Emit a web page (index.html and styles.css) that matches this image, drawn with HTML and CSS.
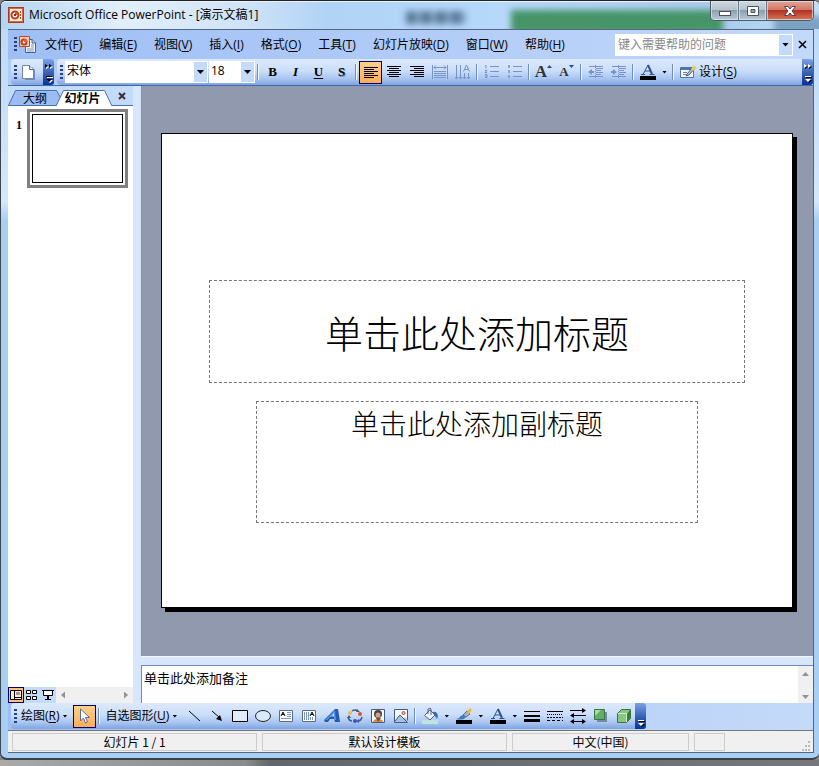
FILE: index.html
```html
<!DOCTYPE html>
<html lang="zh-CN">
<head>
<meta charset="utf-8">
<title>Microsoft Office PowerPoint - [演示文稿1]</title>
<link rel="stylesheet" href="styles.css">
</head>
<body>
<div class="window">
  <header class="titlebar">
    <div class="glass" aria-hidden="true"><i class="ghost-text"></i><i class="ghost-green"></i><i class="ghost-blue"></i></div>
    <svg class="app-icon" width="16" height="16" viewBox="0 0 16 16"><rect x=".5" y=".5" width="15" height="15" fill="#e9632e" stroke="#a83c1c"/><path d="M2 2h12v12H2z" fill="#fff0e3"/><circle cx="7" cy="8" r="3.500" fill="#fff" stroke="#bb3e1c" stroke-width="2"/><path d="M7 8V5a3 3 0 0 1 3 3z" fill="#e45a25"/><path d="M6 7h2v2H6z" fill="#922d16"/><path d="M12 4h1v2h-1zm0 3h1v2h-1zm0 3h1v2h-1z" fill="#b64827"/></svg>
    <h1>Microsoft Office PowerPoint - [演示文稿1]</h1>
    <div class="caption">
      <button class="cap" aria-label="最小化"><svg width="14" height="12" viewBox="0 0 14 12"><rect x="1.500" y="6.500" width="11" height="4" fill="#fff" stroke="#4b5362"/></svg></button>
      <button class="cap" aria-label="最大化"><svg width="14" height="12" viewBox="0 0 14 12"><path d="M1.500 1.500h11v9h-11zM5 4.500v3h4v-3z" fill="#fff" fill-rule="evenodd" stroke="#4b5362"/></svg></button>
      <button class="cap close" aria-label="关闭"><svg width="14" height="12" viewBox="0 0 14 12"><path d="M1.500 1.500h3.500l2 2.500 2-2.500h3.500L9 6l3.500 4.500H9L7 8l-2 2.500H1.500L5 6z" fill="#fff" stroke="#58414a"/></svg></button>
    </div>
  </header>

  <div class="client">
    <nav class="menubar">
      <i class="grip"></i>
      <svg class="doc-icon" width="18" height="18" viewBox="0 0 18 18"><path d="M6.500 3.500h7l3 3v10h-10z" fill="#f5f9ff" stroke="#42658f"/><path d="M13 3v4h4" fill="#b9cbe7" stroke="#42658f"/><path d="M8 13h7M8 15h7M12 9h3M12 11h3" stroke="#7893b8"/><path d="M.5.500h10v10H.5z" fill="#f4c9ad" stroke="#b84a28"/><circle cx="5" cy="6" r="2.500" fill="#fff" stroke="#bc3d20" stroke-width="2"/><path d="M5 6V3a3 3 0 0 1 3 3z" fill="#e5622c"/></svg>
      <div class="menus">
        <button>文件(<u>F</u>)</button><button>编辑(<u>E</u>)</button><button>视图(<u>V</u>)</button><button>插入(<u>I</u>)</button><button>格式(<u>O</u>)</button><button>工具(<u>T</u>)</button><button>幻灯片放映(<u>D</u>)</button><button>窗口(<u>W</u>)</button><button>帮助(<u>H</u>)</button>
      </div>
      <div class="help"><input type="text" placeholder="键入需要帮助的问题" aria-label="键入需要帮助的问题"><button class="drop" aria-label="显示问题列表"></button></div>
      <button class="doc-close" aria-label="关闭窗口"><svg width="9" height="9" viewBox="0 0 9 9"><path d="M1 1l7 7M8 1L1 8" stroke="#000" stroke-width="1.500"/></svg></button>
    </nav>

    <div class="toolbars">
      <div class="bar std">
        <i class="grip"></i>
        <button class="tool" aria-label="新建"><svg width="16" height="16" viewBox="0 0 16 16"><path d="M4 3h8l3 3v10H5z" fill="#6f8cba"/><path d="M2.500 1.500h7l4 4v9h-11z" fill="#fff" stroke="#7587a4"/><path d="M9.500 1.500v4h4" fill="#dce6f5" stroke="#526a92"/></svg></button>
        <button class="more" aria-label="工具栏选项"><svg width="10" height="24" viewBox="0 0 10 24"><path d="M2 5l3 2-3 2zm4 0l3 2-3 2zM3 17h6v1H3zm0 3h6l-3 3z" fill="#fff"/><path d="M1 4l3 2-3 2zm4 0l3 2-3 2zM2 16h6v1H2zm0 3h6l-3 3z" fill="#000"/></svg></button>
      </div>
      <div class="bar fmt">
        <i class="grip"></i>
        <div class="combo font"><select aria-label="字体"><option>宋体</option></select></div>
        <div class="combo size"><select aria-label="字号"><option>18</option></select></div>
        <i class="sep"></i>
        <button class="tool letter b" aria-label="加粗">B</button>
        <button class="tool letter it" aria-label="倾斜">I</button>
        <button class="tool letter un" aria-label="下划线">U</button>
        <button class="tool letter sh" aria-label="阴影">S</button>
        <i class="sep"></i>
        <button class="tool on" aria-label="左对齐"><svg width="16" height="16" viewBox="0 0 16 16"><path d="M1 3.500h14M1 5.500h10M1 7.500h14M1 9.500h10M1 11.500h14M1 13.500h10" stroke="#000"/></svg></button>
        <button class="tool" aria-label="居中"><svg width="16" height="16" viewBox="0 0 16 16"><path d="M1 2.500h14M3 4.500h10M1 6.500h14M3 8.500h10M1 10.500h14M3 12.500h10" stroke="#000"/></svg></button>
        <button class="tool" aria-label="右对齐"><svg width="16" height="16" viewBox="0 0 16 16"><path d="M1 2.500h14M5 4.500h10M1 6.500h14M5 8.500h10M1 10.500h14M5 12.500h10" stroke="#000"/></svg></button>
        <button class="tool" aria-label="分散对齐"><svg width="16" height="16" viewBox="0 0 16 16"><path d="M.5 1v14M15.500 1v14M2 3.500h12M4 1.500l-2 2 2 2M12 1.500l2 2-2 2M2 7.500h12M2 9.500h12M2 11.500h12M2 13.500h12" fill="none" stroke="#7893c6"/></svg></button>
        <button class="tool" aria-label="更改文字方向"><svg width="16" height="16" viewBox="0 0 16 16"><path d="M1.500 1v14M5.500 1v14M9.500 9v6M13.500 9v6M0 13l1.500 2L3 13M4 13l1.500 2L7 13M8 13l1.500 2 1.500-2M12 13l1.500 2 1.500-2M8.500 7.500L11.500 1l3 6.500M10 5.500h4" fill="none" stroke="#7893c6"/></svg></button>
        <i class="sep"></i>
        <button class="tool" aria-label="编号"><svg width="16" height="16" viewBox="0 0 16 16"><path d="M1 1.500h1v3M1 6.500h2l-2 2h2M1 10.500h2v3H1M1 12h2M6 2.500h9M6 7.500h9M6 12.500h9" fill="none" stroke="#7893c6"/></svg></button>
        <button class="tool" aria-label="项目符号"><svg width="16" height="16" viewBox="0 0 16 16"><path d="M6 2.500h9M6 7.500h9M6 12.500h9" stroke="#7893c6"/><path d="M1 1h2v3H1zm0 5h2v3H1zm0 5h2v3H1z" fill="#8ba3cf"/></svg></button>
        <i class="sep"></i>
        <button class="tool letter grow" aria-label="增大字号">A<svg width="5" height="3" viewBox="0 0 5 3"><path d="M0 3L2.500 0 5 3z" fill="#284a93"/></svg></button>
        <button class="tool letter shrink" aria-label="减小字号">A<svg width="5" height="3" viewBox="0 0 5 3"><path d="M0 0h5L2.500 3z" fill="#284a93"/></svg></button>
        <i class="sep"></i>
        <button class="tool" aria-label="减少缩进量"><svg width="16" height="16" viewBox="0 0 16 16"><path d="M1 2.500h14M8 4.500h7M8 6.500h5M8 8.500h7M8 10.500h5M1 12.500h14" stroke="#7893c6"/><path d="M7.500 1v14" stroke="#7893c6" stroke-dasharray="1 1"/><path d="M6 7H4V5L0 8l4 3V9h2z" fill="#7893c6"/></svg></button>
        <button class="tool" aria-label="增加缩进量"><svg width="16" height="16" viewBox="0 0 16 16"><path d="M1 2.500h14M8 4.500h7M8 6.500h5M8 8.500h7M8 10.500h5M1 12.500h14" stroke="#7893c6"/><path d="M7.500 1v14" stroke="#7893c6" stroke-dasharray="1 1"/><path d="M0 7h2V5l4 3-4 3V9H0z" fill="#7893c6"/></svg></button>
        <i class="sep"></i>
        <button class="tool" aria-label="字体颜色"><svg width="16" height="16" viewBox="0 0 16 16"><path d="M0 12h16v4H0z"/><path d="M3 10.500L8 1l4 9.500M5 7h6M1 10.500h4M9.500 10.500h5" fill="none" stroke="#345591"/><path d="M8 1l4 9" stroke="#345591" stroke-width="2"/></svg></button>
        <button class="arrow" aria-label="选择字体颜色"></button>
        <i class="sep"></i>
        <button class="text-tool design"><svg width="16" height="16" viewBox="0 0 16 16"><path d="M.5 3.500h13v10H.5z" fill="#f6fbff" stroke="#51739f"/><path d="M1 4h12v2H1z" fill="#4c77b7"/><path d="M3 8.500h4M3 10.500h3" fill="none" stroke="#5d83b7"/><path d="M7 10l6-7 2 1-6 7-3 1z" fill="#b9c6db" stroke="#3f567e"/><path d="M11 5l3-4 2 2-3 4z" fill="#f4cc50"/></svg><span>设计(<u>S</u>)</span></button>
        <button class="more" aria-label="工具栏选项"><svg width="10" height="24" viewBox="0 0 10 24"><path d="M2 5l3 2-3 2zm4 0l3 2-3 2zM3 17h6v1H3zm0 3h6l-3 3z" fill="#000"/><path d="M1 4l3 2-3 2zm4 0l3 2-3 2zM2 16h6v1H2zm0 3h6l-3 3z" fill="#fff"/></svg></button>
      </div>
    </div>

    <main class="work">
      <aside class="side">
        <div class="tabs">
          <button class="tab outline"><svg width="54" height="17" viewBox="0 0 54 17"><path d="M.5 16.500l7-15h41l4 7-4 8z" fill="#9dbdf2" stroke="#4470b6"/></svg><span>大纲</span></button>
          <button class="tab active"><svg width="58" height="17" viewBox="0 0 58 17"><path d="M1 17L8.500 1.500h41L57 17" fill="#fff" stroke="#4470b6"/></svg><span>幻灯片</span></button>
          <button class="pane-close" aria-label="关闭窗格"><svg width="8" height="8" viewBox="0 0 8 8"><path d="M1 1l6 6M7 1L1 7" stroke="#333" stroke-width="2"/></svg></button>
        </div>
        <div class="thumbs"><span>1</span><button class="thumb" aria-label="幻灯片 1"><i></i></button></div>
        <div class="views">
          <button class="view on" aria-label="普通视图"><svg width="12" height="12" viewBox="0 0 12 12"><path d="M.5 1.500h11v9H.5zM4.500 1.500v9" fill="#f8ebd5" stroke="#000"/><path d="M6 3h4v3H6z" fill="#999"/><path d="M5 8.500h6" stroke="#000"/></svg></button>
          <button class="view" aria-label="浏览视图"><svg width="12" height="12" viewBox="0 0 12 12"><path d="M.5 1.500h4v3h-4zm6 0h4v3h-4zm-6 6h4v3h-4zm6 0h4v3h-4z" fill="#fff" stroke="#000"/></svg></button>
          <button class="view" aria-label="幻灯片放映"><svg width="12" height="12" viewBox="0 0 12 12"><path d="M2 2h8v4H2z" fill="#fff"/><path d="M0 1.500h12M1.500 2v4.500h9V2M5.500 7v4M6.500 7v4M3 10.500h6" fill="none" stroke="#000"/></svg></button>
          <div class="hscroll"><i class="tri left"></i><i class="tri right"></i></div>
        </div>
      </aside>
      <div class="editor">
        <section class="canvas">
          <div class="slide">
            <h2 class="holder">单击此处添加标题</h2>
            <p class="holder">单击此处添加副标题</p>
          </div>
        </section>
        <div class="splitter"></div>
        <section class="notes"><textarea aria-label="备注">单击此处添加备注</textarea><div class="vscroll"><i class="tri up"></i><i class="tri down"></i></div></section>
      </div>
    </main>

    <div class="drawrow">
      <div class="bar draw">
        <i class="grip"></i>
        <button class="text-tool"><span>绘图(<u>R</u>)</span><i class="tri black"></i></button>
        <button class="tool on" aria-label="选择对象"><svg width="16" height="16" viewBox="0 0 16 16"><path d="M4.500 1v12l3-3 2 5 2-1-2-4.500h4z" fill="#fff" stroke="#54709e"/></svg></button>
        <i class="sep"></i>
        <button class="text-tool"><span>自选图形(<u>U</u>)</span><i class="tri black"></i></button>
        <button class="tool" aria-label="直线"><svg width="16" height="16" viewBox="0 0 16 16"><path d="M3 3l11 10" stroke="#000"/></svg></button>
        <button class="tool" aria-label="箭头"><svg width="16" height="16" viewBox="0 0 16 16"><path d="M3 3l8 7" stroke="#000"/><path d="M13 13L7 11l4-4z"/></svg></button>
        <button class="tool" aria-label="矩形"><svg width="16" height="16" viewBox="0 0 16 16"><path d="M.5 2.500h15v11H.5z" fill="#e0ebfb" stroke="#000"/></svg></button>
        <button class="tool" aria-label="椭圆"><svg width="16" height="16" viewBox="0 0 16 16"><ellipse cx="8" cy="8" rx="7.500" ry="5.500" fill="#dce8fb" stroke="#222"/></svg></button>
        <button class="tool" aria-label="文本框"><svg width="16" height="16" viewBox="0 0 16 16"><path d="M1.500 2.500h13v11h-13z" fill="#fff" stroke="#566b91"/><path d="M3 8l2-4 2 4M4 6.500h2" fill="none" stroke="#000"/><path d="M9 4.500h4M9 6.500h4M9 8.500h4M3 10.500h10" stroke="#7894c5"/></svg></button>
        <button class="tool" aria-label="竖排文本框"><svg width="16" height="16" viewBox="0 0 16 16"><path d="M1.500 2.500h13v11h-13z" fill="#fff" stroke="#566b91"/><path d="M9 8l2-4 2 4M10 6.500h2" fill="none" stroke="#000"/><path d="M3.500 4v8M5.500 4v8M7.500 4v8M9.500 9v3M11.500 9v3" stroke="#7894c5"/></svg></button>
        <button class="tool" aria-label="艺术字"><svg width="16" height="16" viewBox="0 0 16 16"><path d="M0 12L11 1h3l2 13h-5l-1-3H6l-2 3H1z" fill="#2459b4"/><path d="M1 12L11 2l1 10h-2V9H6l-3 3z" fill="#5c93e8"/><path d="M8 8l2-3v3z" fill="#e0ebff"/></svg></button>
        <button class="tool" aria-label="图示"><svg width="16" height="16" viewBox="0 0 16 16"><path d="M5 3q3-2 6 0M1 9q1 4 4 4M15 9q-1 4-4 4" fill="none" stroke="#405d8a" stroke-width="1.500"/><path d="M10 1l3 3H9zM0 10l2-3 2 3zm9 3l3-2v4z" fill="#405d8a"/><circle cx="3" cy="5" r="2" fill="#edbc42"/><circle cx="13" cy="6" r="2" fill="#d85331"/><circle cx="8" cy="13" r="2" fill="#4051c9"/></svg></button>
        <button class="tool" aria-label="剪贴画"><svg width="16" height="16" viewBox="0 0 16 16"><path d="M1.500 1.500h13v13h-13z" fill="#f8fbff" stroke="#3f608f"/><path d="M3 14c0-4 10-4 10 0z" fill="#e38b2d"/><circle cx="8" cy="6" r="4" fill="#4a4541"/><circle cx="8" cy="7" r="2.500" fill="#d1a581"/><path d="M6 10l2 4 3-4z" fill="#705040"/></svg></button>
        <button class="tool" aria-label="图片"><svg width="16" height="16" viewBox="0 0 16 16"><path d="M1.500 1.500h13v13h-13z" fill="#f5f9ff" stroke="#3f608f"/><path d="M2 13l5-6 3 4 2-2 3 4v1H2z" fill="#a9bfdf"/><path d="M2 13l5-6 7 7" fill="none" stroke="#405a82"/><circle cx="10.500" cy="5" r="1.500" fill="#ffc28a" stroke="#c64c21"/></svg></button>
        <i class="sep"></i>
        <button class="tool" aria-label="填充颜色"><svg width="16" height="16" viewBox="0 0 16 16"><path d="M0 12h16v4H0z" fill="#bfe3e3"/><path d="M2.500 7.500L8 2l5 5-5 5z" fill="#eef3f8" stroke="#4f6280"/><path d="M6 6V1l2-1 1 1v6" fill="none" stroke="#4f6280"/><path d="M11 4c4-1 6 3 4 7-1-2-2-3-3-4z" fill="#3669b5"/></svg></button>
        <button class="arrow" aria-label="选择填充颜色"></button>
        <button class="tool" aria-label="线条颜色"><svg width="16" height="16" viewBox="0 0 16 16"><path d="M0 12h16v4H0z"/><path d="M0 11c4 0 3-3 7-4l3 2c-2 3-6 3-10 2z" fill="#4679bf"/><path d="M7 7l4-4 3 3-4 3z" fill="#a6b4c8" stroke="#506b93"/><path d="M11 3l3-3 2 2-3 4z" fill="#efbd35"/></svg></button>
        <button class="arrow" aria-label="选择线条颜色"></button>
        <button class="tool" aria-label="字体颜色"><svg width="16" height="16" viewBox="0 0 16 16"><path d="M0 12h16v4H0z"/><path d="M3 10.500L8 1l4 9.500M5 7h6M1 10.500h4M9.500 10.500h5" fill="none" stroke="#345591"/><path d="M8 1l4 9" stroke="#345591" stroke-width="2"/></svg></button>
        <button class="arrow" aria-label="选择字体颜色"></button>
        <button class="tool" aria-label="线型"><svg width="16" height="16" viewBox="0 0 16 16"><path d="M0 3h16v1H0zm0 4h16v2H0zm0 4h16v3H0z"/></svg></button>
        <button class="tool" aria-label="虚线线型"><svg width="16" height="16" viewBox="0 0 16 16"><path d="M0 3.500h16" stroke="#000"/><path d="M0 6.500h16" stroke="#000" stroke-dasharray="1 1"/><path d="M0 9.500h16" stroke="#000" stroke-dasharray="2 1"/><path d="M0 12.500h16" stroke="#000" stroke-dasharray="3 2"/></svg></button>
        <button class="tool" aria-label="箭头样式"><svg width="16" height="16" viewBox="0 0 16 16"><path d="M0 2.500h14M2 7.500h14M1 13.500h14" stroke="#000"/><path d="M12 0l4 2.500L12 5zM4 5L0 7.500 4 10zM4 11l-4 2.500L4 16zm8 0l4 2.500-4 2.500z"/></svg></button>
        <button class="tool" aria-label="阴影样式"><svg width="16" height="16" viewBox="0 0 16 16"><path d="M4 4h10v10H4z" fill="#748baa"/><path d="M1.500 1.500h10v10h-10z" fill="#62ae64" stroke="#397443"/><path d="M2 2h6L2 8z" fill="#a6d9a3"/></svg></button>
        <button class="tool" aria-label="三维效果样式"><svg width="16" height="16" viewBox="0 0 16 16"><path d="M1.500 5.500l4-4h9v9l-4 4h-9z" fill="#87c781" stroke="#38733c"/><path d="M11 6l3-4v8l-3 4z" fill="#347a3b"/><path d="M2 5.500h8.500V14" fill="none" stroke="#d1efca"/></svg></button>
        <button class="more" aria-label="工具栏选项"><svg width="10" height="24" viewBox="0 0 10 24"><path d="M3 17h6v1H3zm0 3h6l-3 3z" fill="#000"/><path d="M2 16h6v1H2zm0 3h6l-3 3z" fill="#fff"/></svg></button>
      </div>
    </div>

    <footer class="status"><span class="wide">幻灯片 1 / 1</span><span class="wide">默认设计模板</span><span class="lang">中文(中国)</span><span class="empty"></span><svg class="resize" width="10" height="10" viewBox="0 0 10 10"><path d="M7 0h2v2H7zM4 4h2v2H4zm3 0h2v2H7zM1 8h2v2H1zm3 0h2v2H4zm3 0h2v2H7z" fill="#bbb"/></svg></footer>
  </div>
</div>
<div class="desktop" aria-hidden="true"></div>
</body>
</html>
```

FILE: styles.css
```css
* { box-sizing: border-box; }
html, body { height: 100%; }
body {
  margin: 0;
  display: flex;
  flex-direction: column;
  background: #858585;
  color: #000;
  font: 12px/16px "Open Sans", "Noto Sans CJK SC", sans-serif;
  overflow: hidden;
}
button, input, select, textarea {
  margin: 0;
  padding: 0;
  border: 0;
  border-radius: 0;
  background: none;
  color: inherit;
  font: inherit;
}
button { display: flex; align-items: center; justify-content: center; flex: none; white-space: nowrap; }
svg { display: block; flex: none; }
i { flex: none; }
u { text-underline-offset: 2px; }

/* Window frame */
.window {
  flex: 1;
  min-height: 0;
  display: flex;
  flex-direction: column;
  padding: 0 5px 5px 7px;
  border-top: 1px solid #222;
  border-bottom: 2px solid #394149;
  border-left: 1px solid #3c4652;
  border-radius: 6px 6px 7px 7px;
  background: linear-gradient(#b9d8f8, #d5e8fb 200px, #a9cef2 220px, #a9cff3);
}
.desktop { height: 6px; flex: none; background: linear-gradient(90deg, #aaa, #8b8b8b 30%, #65666b 33%, #77777b); }

.titlebar { position: relative; display: flex; align-items: center; gap: 5px; height: 28px; flex: none; }
.titlebar h1 { position: relative; margin: 0; font-size: 12px; font-weight: 400; flex: 1; }
.app-icon { position: relative; }
.glass {
  position: absolute;
  inset: 0 -5px 0 -7px;
  overflow: hidden;
  border-radius: 5px 5px 0 0;
  border-top: 1px solid #e8f5ff;
  background: linear-gradient(90deg, #b5d4f2, #e2effb 15%, #cfe3f7 30%, #b0d3f6 40%, #b5d8fb 62%, #a9cdee 88%, #c2dff5);
}
.glass i { position: absolute; filter: blur(3px); }
.ghost-text { left: 405px; top: 9px; width: 60px; height: 13px; background: repeating-linear-gradient(90deg, #5c7b99 0 10px, #86a7c8 10px 15px); }
.ghost-green { left: 510px; top: 8px; width: 212px; height: 24px; background: #479468; }
.ghost-blue { left: 773px; top: 14px; width: 50px; height: 20px; background: #7ba2c3; }
.caption { position: relative; display: flex; align-self: flex-start; border: 1px solid #4d5b69; border-top: 0; border-radius: 0 0 5px 5px; overflow: hidden; }
.cap { width: 28px; height: 19px; border-right: 1px solid #657789; box-shadow: inset 0 0 0 1px #e3ebf2aa; background: linear-gradient(#d0dae2, #b5c2cc 48%, #8c9fae 50%, #b9cad6); }
.cap.close { width: 46px; border: 0; background: linear-gradient(#e3a69a, #cf7565 48%, #b53220 50%, #d4765b); }

.client { flex: 1; min-height: 0; display: flex; flex-direction: column; border: 1px solid #52677f; border-left: 0; background: #c4daf9; }

/* Menu and toolbars */
.menubar { height: 29px; flex: none; display: flex; align-items: center; padding: 0 2px 0 6px; background: linear-gradient(90deg, #9ebef5, #c3d9fa); }
.grip { width: 3px; height: 15px; background: repeating-linear-gradient(#27417c 0 2px, transparent 2px 4px); }
.doc-icon { margin: 0 8px 0 2px; }
.menus { flex: 1; display: flex; gap: 17px; }
.help { display: flex; width: 178px; height: 22px; background: #fff; padding: 1px; }
.help input { flex: 1; min-width: 0; padding: 0 2px; }
.help input::placeholder { color: #888; opacity: 1; }
.drop { width: 13px; background: #c4daf9; }
.drop::before, .arrow::before, .combo::before {
  content: "";
  width: 7px;
  height: 4px;
  background: #000;
  clip-path: polygon(0 0, 100% 0, 50% 100%);
}
.doc-close { width: 18px; height: 20px; }

.toolbars { height: 27px; flex: none; display: flex; gap: 3px; padding-left: 3px; background: #b0cbf5; border-bottom: 1px solid #4169ae; }
.bar { display: flex; align-items: center; padding-left: 3px; border-radius: 4px 3px 3px 4px; background: linear-gradient(#dce9fd, #cbdef9 45%, #a9c5f2 75%, #7fa4df); }
.std { flex: none; }
.std .tool { width: 26px; padding-right: 4px; }
.fmt { flex: 1; min-width: 0; }
.more { width: 11px; align-self: stretch; border-radius: 0 3px 3px 0; background: linear-gradient(#7ba2e7, #3b64b4 50%, #06349b); }
.fmt .more, .draw .more { margin-left: auto; }
.combo { position: relative; display: flex; height: 22px; background: #fff; }
.combo select { appearance: none; width: 100%; padding: 0 16px 2px 2px; }
.combo::before { position: absolute; right: 4px; top: 9px; pointer-events: none; z-index: 1; }
.combo::after { content: ""; position: absolute; right: 1px; top: 1px; width: 13px; height: 20px; background: #c4daf9; pointer-events: none; }
.font { width: 143px; margin: 0 1px 0 2px; }
.size { width: 46px; }
.sep { width: 2px; height: 16px; margin: 0 2px; background: linear-gradient(90deg, #6a8ccb 50%, #f3f8ff 50%); }
.tool { width: 23px; height: 23px; }
.on { border: 1px solid #000080; background: linear-gradient(#ffd08c, #ffad55); }
.letter { font: bold 13px/16px "Liberation Serif", serif; }
.it { font-style: italic; }
.un { text-decoration: underline; text-underline-offset: 2px; }
.sh { text-shadow: 1px 1px #7c8eac; }
.grow { font-size: 17px; color: #333; }
.shrink { font-size: 13px; color: #333; }
.letter svg { align-self: flex-start; margin-top: 4px; }
.arrow { width: 11px; height: 23px; }
.arrow::before { width: 5px; height: 3px; }
.text-tool { padding: 0 4px; gap: 3px; }

/* Slide list */
.work { flex: 1; min-height: 0; display: flex; }
.side { width: 125px; flex: none; display: flex; flex-direction: column; background: #fff; }
.tabs { display: flex; height: 20px; flex: none; padding-top: 3px; background: #c4daf9; border-bottom: 1px solid #4470b6; }
.tab { position: relative; height: 17px; font-family: "Noto Sans CJK SC", sans-serif; }
.tab svg { position: absolute; left: 0; top: 0; }
.tab span { position: relative; }
.outline { width: 54px; }
.active { width: 58px; margin-left: -7px; padding-right: 3px; font-weight: 700; z-index: 1; }
.pane-close { width: 17px; height: 14px; }
.thumbs { flex: 1; display: flex; align-items: flex-start; gap: 5px; padding: 3px 5px 0 8px; }
.thumbs span { padding-top: 8px; width: 6px; font: bold 12px/16px "Liberation Serif", serif; }
.thumb { flex: 1; aspect-ratio: 101 / 79; border: 3px solid #808080; padding: 2px; }
.thumb i { flex: 1; align-self: stretch; border: 1px solid #000; background: #fff; }
.views { height: 16px; flex: none; display: flex; }
.view { width: 16px; background: #c4daf9; }
.view.on { background: #ffc079; }
.hscroll { flex: 1; display: flex; align-items: center; justify-content: space-between; padding: 0 5px; background: #f0f0f0; }
.tri { background: #929292; }
.left { width: 4px; height: 7px; clip-path: polygon(100% 0, 100% 100%, 0 50%); }
.right { width: 4px; height: 7px; clip-path: polygon(0 0, 100% 50%, 0 100%); }
.up { width: 7px; height: 4px; clip-path: polygon(50% 0, 100% 100%, 0 100%); }
.down { width: 7px; height: 4px; clip-path: polygon(0 0, 100% 0, 50% 100%); }
.black { width: 5px; height: 3px; background: #000; clip-path: polygon(0 0, 100% 0, 50% 100%); }

/* Slide and notes */
.editor { flex: 1; min-width: 0; display: flex; flex-direction: column; border-left: 8px solid #d8e6fc; }
.canvas { flex: 1; min-height: 0; padding: 47px 20px 48px 19px; display: flex; background: #9199ae; border-left: 1px solid #7390ce; }
.slide {
  flex: 1;
  display: grid;
  grid-template-rows: 103fr 122fr;
  gap: 18px;
  padding: 146px 47px 84px;
  border: 1px solid #000;
  background: #fff;
  box-shadow: 4px 4px #000;
}
.holder { margin: 0; border: 1px dashed #777; text-align: center; font-family: "Noto Sans CJK SC", sans-serif; font-weight: 300; white-space: nowrap; }
h2.holder { display: grid; place-items: center; font-size: 38px; line-height: 48px; }
p.holder { margin: 0 47px; padding-top: 2px; font-size: 28px; line-height: 38px; }
.splitter { height: 9px; flex: none; background: #d8e6fc; border-top: 1px solid #f4f8ff; }
.notes { height: 38px; flex: none; display: flex; border-top: 1px solid #6888cb; border-left: 1px solid #6888cb; background: #fff; }
.notes textarea { flex: 1; resize: none; padding: 4px 2px; font: 13px/16px "Noto Sans CJK SC", sans-serif; overflow: hidden; }
.vscroll { width: 15px; display: flex; flex-direction: column; align-items: center; justify-content: space-between; padding: 6px 0 4px; background: #f0f0f0; }

/* Drawing bar and status bar */
.drawrow { height: 27px; flex: none; display: flex; padding: 0 0 1px 3px; background: linear-gradient(90deg, #9ebef5, #c4daf9); }
.draw { flex: none; }
.draw .text-tool { padding: 0 5px 0 4px; }
.status { height: 22px; flex: none; display: flex; gap: 5px; padding: 2px 2px 1px 4px; border-top: 1px solid #777; background: #f0f0f0; font: 12px/16px "Noto Sans CJK SC", sans-serif; }
.status span { border: 1px solid #ccc; text-align: center; }
.wide { flex: 0 1 245px; }
.lang { flex: 0 1 177px; }
.empty { flex: 0 1 31px; }
.resize { margin-left: auto; align-self: flex-end; }
```
